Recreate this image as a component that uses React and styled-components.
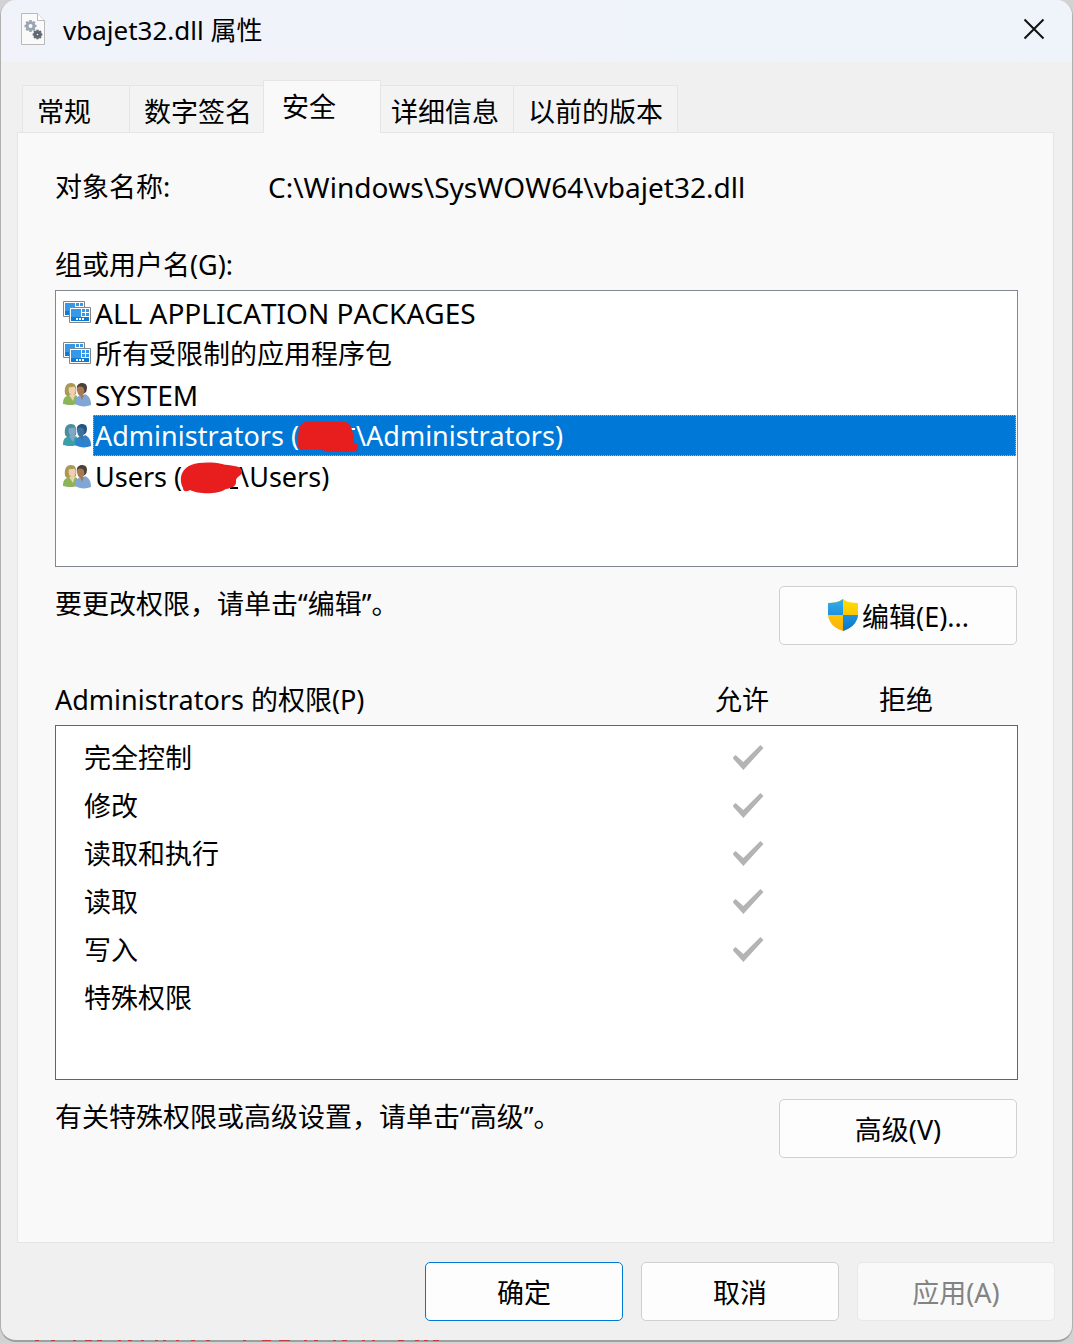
import React from 'react';
import styled, { createGlobalStyle, css } from 'styled-components';

const GlobalStyle = createGlobalStyle`
  * {
    box-sizing: border-box;
  }
  body {
    background: #d2d2d2;
    color: #000;
    font-family: 'Noto Sans', 'Noto Sans CJK SC', sans-serif;
    font-kerning: none;
    font-size: 27px;
    line-height: 36px;
    margin: 0;
  }
  button, input {
    color: inherit;
    font: inherit;
    font-kerning: none;
  }
`;

const Window = styled.main`
  background: #f0f0f0;
  border: 1px solid #b0b0b0;
  border-bottom: 2px solid #9f9f9f;
  border-radius: 16px;
  border-top-width: 0;
  position: relative;
`;

const TitleBar = styled.header`
  align-items: center;
  background: linear-gradient(90deg, #f0f3fa, #eef4f9);
  border-radius: 15px 15px 0 0;
  display: flex;
  height: 62px;
  padding: 0 27px 4px 20px;
  svg {
    display: block;
  }
`;

const Title = styled.h1`
  flex: 1;
  font-size: 26px;
  font-weight: 400;
  margin: 2px 0 0 17px;
`;

const CloseButton = styled.button`
  background: none;
  border: 0;
  padding: 0;
`;

const TabList = styled.div`
  align-items: flex-end;
  display: flex;
  margin: 18px 0 0 21px;
`;

const Tab = styled.button`
  background: #f3f3f3;
  border: 1px solid #e5e5e5;
  border-bottom: 0;
  border-right-width: 0;
  height: 47px;
  min-width: 107px;
  padding: 6px 14px 0;
  text-align: left;
  white-space: nowrap;
  &:last-child {
    border-right-width: 1px;
  }
  ${({ $active }) =>
    $active &&
    css`
      background: #f9f9f9;
      border-right-width: 1px;
      height: 53px;
      margin: 0 -5px -1px -3px;
      min-width: 118px;
      padding: 0 18px 1px;
      position: relative;
      z-index: 1;
    `}
`;

const Panel = styled.section`
  background: #f9f9f9;
  border: 1px solid #e5e5e5;
  margin: 0 18px 0 16px;
  padding: 36px 35px 84px 37px;
`;

const ObjectRow = styled.div`
  display: grid;
  grid-template-columns: 213px 1fr;
  margin-bottom: 42px;
`;

const ObjectPath = styled.span`
  font-size: 28px;
`;

const GroupLabel = styled.div`
  margin-bottom: 7px;
`;

const GroupList = styled.div`
  background: #fff;
  border: 1px solid #828790;
  min-height: 277px;
  padding: 1px 1px 0 7px;
`;

const GroupItem = styled.div`
  display: flex;
  gap: 2px;
  height: 41px;
  svg {
    flex: none;
  }
  > svg {
    margin-top: 6px;
  }
`;

const GroupName = styled.span`
  border: 1px dotted transparent;
  flex: 1;
  font-size: ${({ $large }) => ($large ? '28px' : '27px')};
  padding: 2px 1px 0;
  white-space: nowrap;
  ${({ $selected }) =>
    $selected &&
    css`
      background: #0078d7;
      border-color: #e8a15c;
      color: #fff;
    `}
`;

const Scribble = styled.svg`
  display: inline-block;
  height: 36px;
  margin: 0 -4px 0 -2px;
  position: relative;
  vertical-align: middle;
  width: 63px;
`;

const ActionRow = styled.div`
  align-items: flex-start;
  display: flex;
  justify-content: space-between;
  margin: 19px 1px 0 0;
`;

const Button = styled.button`
  align-items: center;
  background: #fdfdfd;
  border: 1px solid ${({ $primary }) => ($primary ? '#0078d4' : '#d0d0d0')};
  border-radius: 5px;
  display: flex;
  gap: 3px;
  height: 59px;
  justify-content: center;
  padding: 2px 0 0;
  width: ${({ $wide }) => ($wide ? '238px' : '198px')};
  &:disabled {
    background: #f9f9f9;
    border-color: #e8e8e8;
    color: #838383;
  }
  svg {
    margin-bottom: 4px;
  }
`;

const PermissionTable = styled.table`
  display: block;
  margin-top: 37px;
  thead,
  tbody {
    display: block;
  }
  thead {
    padding: 0 30px 7px 0;
  }
  tbody {
    background: #fff;
    border: 1px solid #646464;
    min-height: 355px;
    padding: 8px 23px 0 28px;
  }
  tr {
    display: grid;
    grid-template-columns: 1fr 164px 164px;
  }
  th,
  td {
    font-weight: 400;
    padding: 0;
    text-align: center;
  }
  th:first-child {
    text-align: left;
  }
  tbody tr {
    height: 48px;
    line-height: 48px;
  }
`;

const Tick = styled.input`
  appearance: none;
  background: ${({ checked }) => (checked ? '#b4b4b4' : 'transparent')};
  clip-path: polygon(0 52%, 10% 40%, 35% 68%, 90% 0, 100% 12%, 35% 100%);
  display: block;
  height: 25px;
  margin: 11px auto 0;
  width: 31px;
`;

const Footer = styled.footer`
  display: flex;
  gap: 18px;
  justify-content: flex-end;
  padding: 19px 17px 19px 0;
`;

const Fringe = styled.svg`
  bottom: -2px;
  left: 0;
  position: absolute;
`;

const gearTeeth = [0, 45, 90, 135];

const Gear = ({ x, y, r, color }) => (
  <g transform={`translate(${x} ${y})`} stroke={color} fill="none">
    {gearTeeth.map((a) => (
      <path key={a} d={`M0 ${-r - 2}V${-r}M0 ${r}V${r + 2}`} strokeWidth="2.4" transform={`rotate(${a})`} />
    ))}
    <circle r={r - 0.6} strokeWidth="2.8" />
  </g>
);

const FileIcon = () => (
  <svg width="25" height="33" viewBox="0 0 25 33" aria-hidden="true">
    <path d="M.5 .5H16.5L23.5 7.5V31.5H.5Z" fill="#fafafa" stroke="#b9b9b9" />
    <path d="M16.5 .5V7.5H23.5" fill="#fff" stroke="#b9b9b9" />
    <Gear x={9.5} y={13} r={4} color="#9aa5b1" />
    <Gear x={16.5} y={21.5} r={2.8} color="#5d6871" />
  </svg>
);

const Tile = ({ x, y }) => (
  <g transform={`translate(${x} ${y})`}>
    <path d="M.5 .5H21.5V15.5H.5Z" fill="#fff" stroke="#858585" />
    <path d="M2 2H12V10H2ZM13 2H16V5H13ZM17 2H20V5H17ZM13 6H16V9H13ZM17 6H20V9H17Z" fill="#3698e8" />
    <path d="M2 10H20V14H2Z" fill="#0c7bd4" />
    <path d="M7 11H9V13H7ZM10 11H12V13H10ZM13 11H15V13H13Z" fill="#fff" />
  </g>
);

const PackageIcon = () => (
  <svg width="28" height="26" viewBox="0 0 28 26" aria-hidden="true">
    <Tile x={0} y={3} />
    <Tile x={6} y={9} />
  </svg>
);

const UsersIcon = ({ selected }) => {
  const c = selected
    ? ['#4a8f9c', '#7fa9c6', '#3a9fa8', '#24547f', '#3f719c', '#2e83cc']
    : ['#a99a55', '#f0cfae', '#8db45a', '#4b4038', '#a87852', '#7fa6d4'];
  return (
    <svg width="28" height="28" viewBox="0 -2 28 28" aria-hidden="true">
      <path d="M2 12C1 5 3 1 8 1C12 1 14 4 13 12L10 14H4Z" fill={c[0]} />
      <path d="M6 5C8 6 11 3 12.5 6C13 10 12 13 9.5 13C6 13 5 9 6 5Z" fill={c[1]} />
      <path d="M0 22C0 15 3 14 7 13L10 15L13 13L16 17V21C11 24 4 23 0 22Z" fill={c[2]} />
      <path d="M6 13L10 19L12 13L10 12Z" fill={c[1]} />
      <path d="M14 8C13 3 16 1 19 1C24 1 25 5 23 10L19 13Z" fill={c[3]} />
      <path d="M14 6C16 4 20 4 21 7C22 11 20 14 18 14C15 14 14 10 14 6Z" fill={c[4]} />
      <path d="M12 22C12 16 14 15 17 13L19 15L22 12C26 14 28 17 28 23C23 25 17 25 12 22Z" fill={c[5]} />
      <path d="M17 13L19 18L21 13Z" fill={c[4]} />
    </svg>
  );
};

const ShieldIcon = () => (
  <svg width="32" height="34" viewBox="0 0 32 34" aria-hidden="true">
    <defs>
      <clipPath id="shield">
        <path d="M16 1C20 4 25 5 31 5V16C31 24 25 30 16 33C7 30 1 24 1 16V5C7 5 12 4 16 1Z" />
      </clipPath>
      <linearGradient id="shieldBlue" x2="0" y2="34" gradientUnits="userSpaceOnUse">
        <stop stopColor="#36b0ee" />
        <stop offset="1" stopColor="#0873cc" />
      </linearGradient>
      <linearGradient id="shieldGold" x2="0" y2="34" gradientUnits="userSpaceOnUse">
        <stop stopColor="#ffe000" />
        <stop offset="1" stopColor="#fcac0c" />
      </linearGradient>
    </defs>
    <g clipPath="url(#shield)">
      <path d="M0 0H32V34H0Z" fill="url(#shieldGold)" />
      <path d="M0 0H16V17H0ZM16 17H32V34H16Z" fill="url(#shieldBlue)" />
    </g>
  </svg>
);

const AdminScribble = () => (
  <Scribble viewBox="0 0 63 36" aria-hidden="true">
    <path d="M51 8H58" stroke="#fff" strokeWidth="2" />
    <path
      d="M8 1C20 0 36 1 48 1C53 2 55 7 56 13L57 22C62 22 63 29 58 30C50 31 34 32 25 29C16 28 9 28 4 29C-1 26 2 21 1 16C2 10 1 4 8 1Z"
      fill="#e71d1e"
    />
  </Scribble>
);

const UsersScribble = () => (
  <Scribble viewBox="0 0 63 36" aria-hidden="true">
    <path d="M50 26H58" stroke="#000" strokeWidth="2" />
    <path
      d="M11 3C20 0 32 0 42 2C50 4 60 3 62 8C63 14 57 14 56 18C57 25 51 26 46 27C37 33 18 32 10 28C7 30 3 30 3 26C-1 18 0 8 11 3Z"
      fill="#e71d1e"
    />
  </Scribble>
);

const tabs = ['常规', '数字签名', '安全', '详细信息', '以前的版本'];

const groups = [
  { id: 'packages', icon: PackageIcon, name: 'ALL APPLICATION PACKAGES', large: true },
  { id: 'restricted', icon: PackageIcon, name: '所有受限制的应用程序包' },
  { id: 'system', icon: UsersIcon, name: 'SYSTEM', large: true },
  {
    id: 'admins',
    icon: UsersIcon,
    name: <>Administrators (<AdminScribble />\Administrators)</>,
    selected: true,
  },
  { id: 'users', icon: UsersIcon, name: <>Users (<UsersScribble />\Users)</> },
];

const permissions = [
  { name: '完全控制', allow: true },
  { name: '修改', allow: true },
  { name: '读取和执行', allow: true },
  { name: '读取', allow: true },
  { name: '写入', allow: true },
  { name: '特殊权限', allow: false },
];

const App = () => (
  <>
    <GlobalStyle />
    <Window>
      <TitleBar>
        <FileIcon />
        <Title>vbajet32.dll 属性</Title>
        <CloseButton type="button" aria-label="关闭">
          <svg width="22" height="22" viewBox="0 0 22 22">
            <path d="M1.5 1.5L20.5 20.5M20.5 1.5L1.5 20.5" stroke="#111" strokeWidth="2" />
          </svg>
        </CloseButton>
      </TitleBar>
      <TabList role="tablist">
        {tabs.map((tab) => (
          <Tab key={tab} type="button" role="tab" aria-selected={tab === '安全'} $active={tab === '安全'}>
            {tab}
          </Tab>
        ))}
      </TabList>
      <Panel role="tabpanel">
        <ObjectRow>
          <span>对象名称:</span>
          <ObjectPath>C:\Windows\SysWOW64\vbajet32.dll</ObjectPath>
        </ObjectRow>
        <GroupLabel id="groups">组或用户名(G):</GroupLabel>
        <GroupList role="listbox" aria-labelledby="groups">
          {groups.map(({ id, icon: Icon, name, large, selected = false }) => (
            <GroupItem key={id} role="option" aria-selected={selected}>
              <Icon selected={selected} />
              <GroupName $selected={selected} $large={large}>{name}</GroupName>
            </GroupItem>
          ))}
        </GroupList>
        <ActionRow>
          <span>要更改权限，请单击“编辑”。</span>
          <Button type="button" $wide>
            <ShieldIcon />
            编辑(E)...
          </Button>
        </ActionRow>
        <PermissionTable>
          <thead>
            <tr>
              <th scope="col">Administrators 的权限(P)</th>
              <th scope="col">允许</th>
              <th scope="col">拒绝</th>
            </tr>
          </thead>
          <tbody>
            {permissions.map(({ name, allow }) => (
              <tr key={name}>
                <th scope="row">{name}</th>
                <td>
                  <Tick type="checkbox" checked={allow} disabled readOnly aria-label={`${name} 允许`} />
                </td>
                <td>
                  <Tick type="checkbox" checked={false} disabled readOnly aria-label={`${name} 拒绝`} />
                </td>
              </tr>
            ))}
          </tbody>
        </PermissionTable>
        <ActionRow>
          <span>有关特殊权限或高级设置，请单击“高级”。</span>
          <Button type="button" $wide>高级(V)</Button>
        </ActionRow>
      </Panel>
      <Footer>
        <Button type="button" $primary>确定</Button>
        <Button type="button">取消</Button>
        <Button type="button" disabled>应用(A)</Button>
      </Footer>
      <Fringe width="440" height="2" aria-hidden="true">
        <path
          d="M34 .5H38M50 .5H54M72 .5H75M84 .5H91M96 .5H101M117 .5H120M127 .5H131M140 .5H143M154 .5H157M162 .5H165M175 .5H178M190 .5H194M205 .5H209M242 .5H245M261 .5H270M278 .5H289M303 .5H306M313 .5H317M332 .5H335M341 .5H346M361 .5H364M371 .5H374M397 .5H403M414 .5H418M423 .5H427M432 .5H438"
          stroke="#c8393b"
        />
      </Fringe>
    </Window>
  </>
);

export default App;
